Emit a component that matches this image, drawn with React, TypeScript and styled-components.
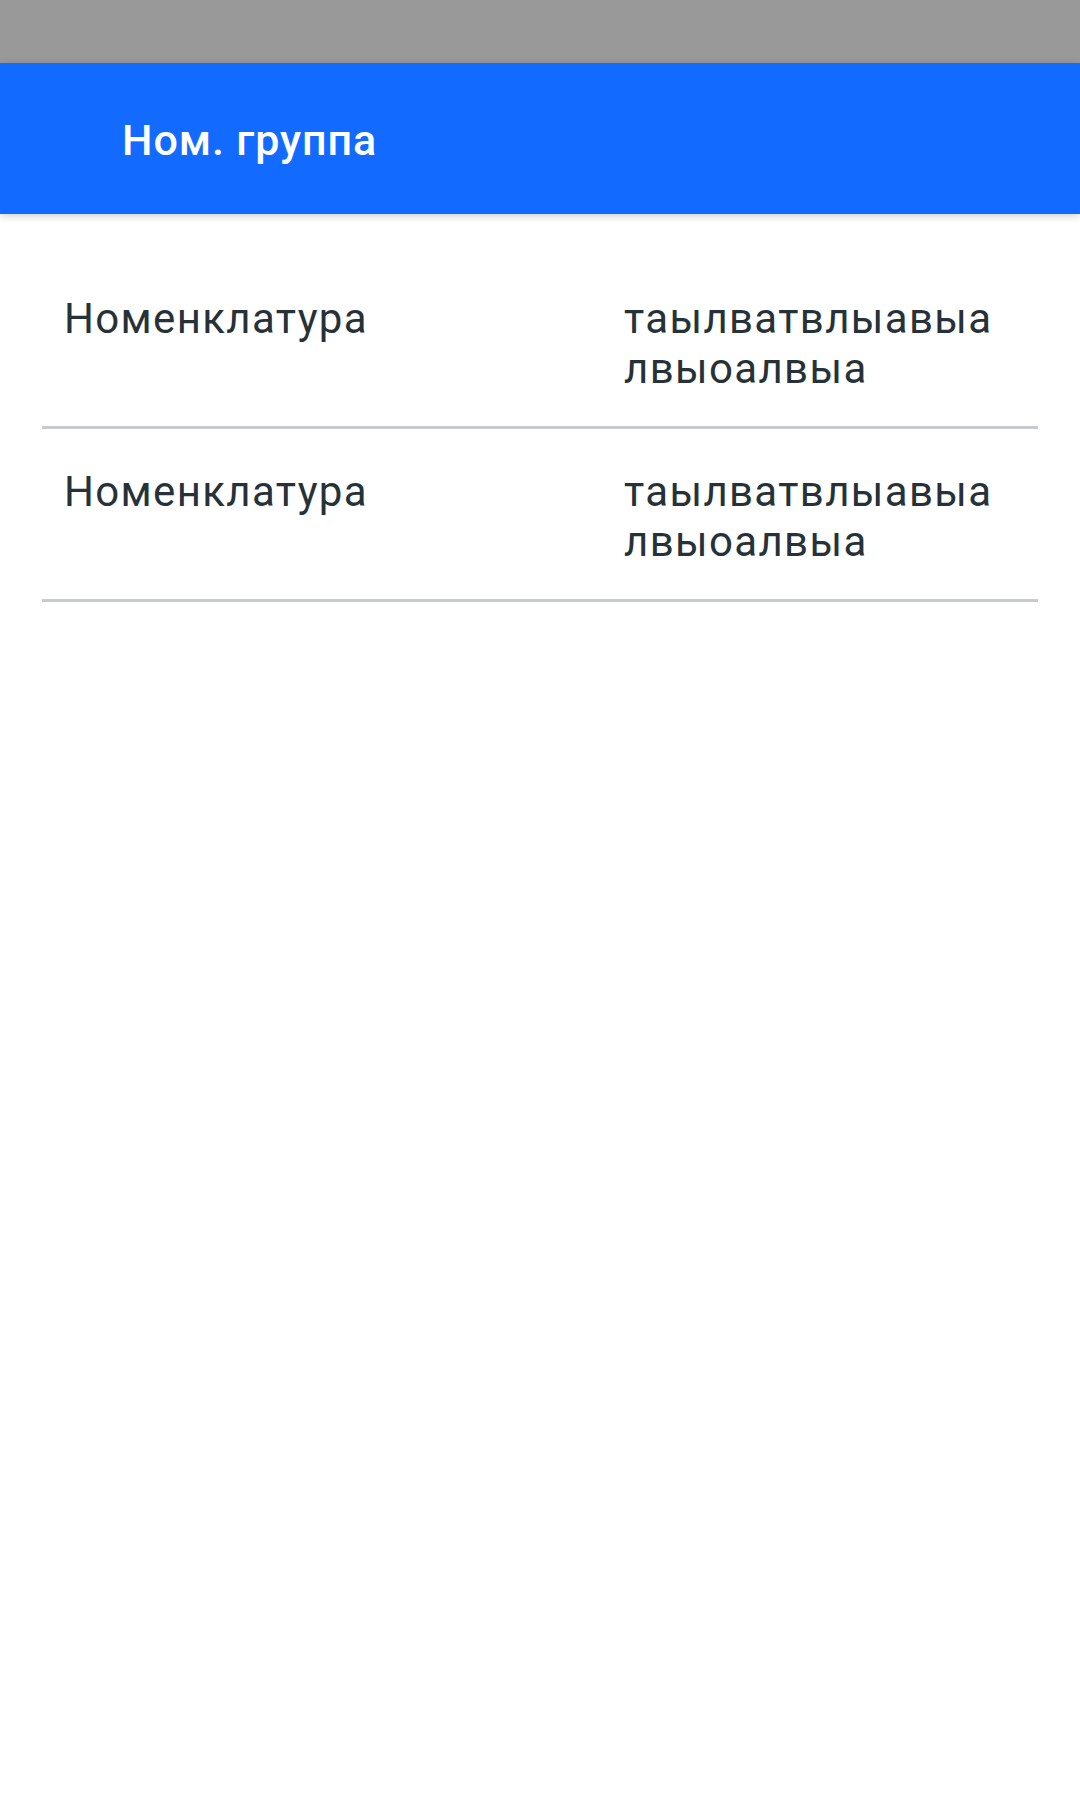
import React from "react";
import styled, { createGlobalStyle } from "styled-components";

const Global = createGlobalStyle`
  html, body { margin: 0; padding: 0; background: #ffffff; }
  body { font-family: Roboto, "Noto Sans", sans-serif; }
  #root { min-height: 1794px; background: #ffffff; }
`;

const Screen = styled.div`
  display: flex;
  flex-direction: column;
  width: 1080px;
  min-height: 1794px;
  background: #ffffff;
`;

const StatusBar = styled.div`
  height: 63px;
  background: #999999;
`;

const AppBar = styled.header`
  box-sizing: border-box;
  height: 151px;
  background: #136aff;
  display: flex;
  align-items: center;
  padding: 4px 0 0 122px;
  box-shadow: 0 2px 8px rgba(0, 0, 0, 0.18);
  position: relative;
  z-index: 1;
`;

const Title = styled.h1`
  margin: 0;
  font-family: Roboto, sans-serif;
  font-weight: 500;
  font-size: 43px;
  letter-spacing: 0.9px;
  color: #ffffff;
  line-height: 1;
`;

const List = styled.div`
  display: flex;
  flex-direction: column;
  margin: 42px 42px 0 42px;
`;

const Row = styled.div`
  display: grid;
  grid-template-columns: 560px 1fr;
  padding: 38px 22px 32px 22px;
  border-bottom: 3px solid #c8cad2;
`;

const Cell = styled.div`
  font-family: Roboto, sans-serif;
  font-size: 42px;
  line-height: 50px;
  letter-spacing: 1.35px;
  color: #263238;
  word-break: break-word;
`;

const rows = [
  { name: "Номенклатура", value: "таылватвлыавыа лвыоалвыа" },
  { name: "Номенклатура", value: "таылватвлыавыа лвыоалвыа" },
];

export default function App() {
  return (
    <>
      <Global />
      <Screen>
        <StatusBar />
        <AppBar>
          <Title>Ном. группа</Title>
        </AppBar>
        <List>
          {rows.map((r, i) => (
            <Row key={i}>
              <Cell>{r.name}</Cell>
              <Cell>{r.value}</Cell>
            </Row>
          ))}
        </List>
      </Screen>
    </>
  );
}
